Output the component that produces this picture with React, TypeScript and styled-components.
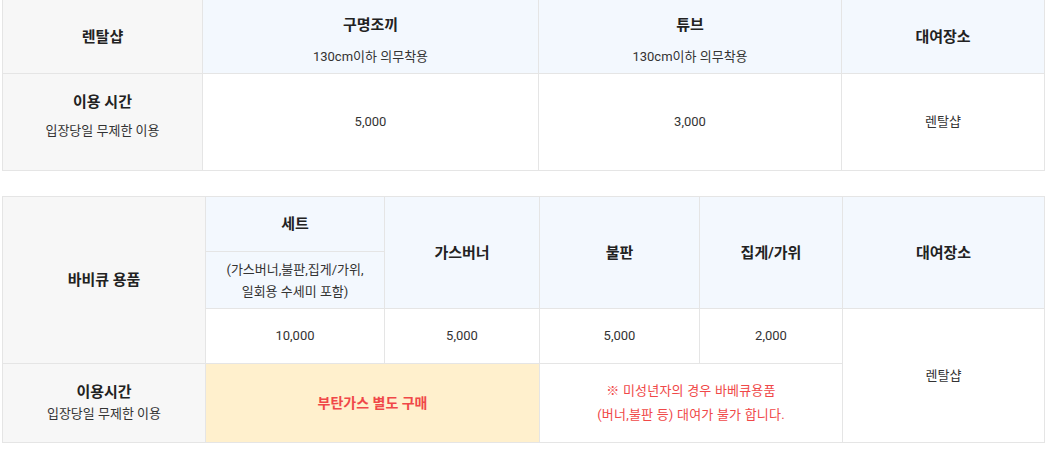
import React from "react";
import styled, { createGlobalStyle } from "styled-components";

const Global = createGlobalStyle`
  html, body { margin: 0; padding: 0; background: #fff; }
  body { font-family: Roboto, "Noto Sans CJK KR", sans-serif; color: #333; }
`;

const Page = styled.div`
  padding: 0 1px 0 2px;
  display: flex;
  flex-direction: column;
  gap: 25px;
`;

const Table = styled.table<{ $shiftTop?: boolean }>`
  width: 1042px;
  table-layout: fixed;
  border-collapse: collapse;
  margin-top: ${(p) => (p.$shiftTop ? "-1px" : "0")};
  font-size: 13px;
`;

const Row = styled.tr<{ $h: number }>`
  height: ${(p) => p.$h}px;
`;

type Tone = "side" | "head" | "plain" | "warn";

const Cell = styled.td<{ $tone?: Tone }>`
  border: 1px solid #e5e5e5;
  padding: 0;
  text-align: center;
  vertical-align: middle;
  background: ${(p) =>
    p.$tone === "side"
      ? "#f7f7f7"
      : p.$tone === "head"
      ? "#f3f8fe"
      : p.$tone === "warn"
      ? "#fff0cd"
      : "#fff"};
  color: #333;
  line-height: 20px;
`;

const Title = styled.div`
  font-size: 15px;
  font-weight: 700;
  color: #222;
  line-height: 22px;
`;

const Sub = styled.div<{ $gap?: number }>`
  font-size: 13px;
  color: #333;
  line-height: 22px;
  margin-top: ${(p) => p.$gap ?? 0}px;
`;

const Stack = styled.div<{ $padTop?: number; $padBottom?: number }>`
  display: flex;
  flex-direction: column;
  align-items: center;
  padding-top: ${(p) => p.$padTop ?? 0}px;
  padding-bottom: ${(p) => p.$padBottom ?? 0}px;
`;

const Warn = styled.span`
  font-size: 14px;
  font-weight: 700;
  color: #f04848;
`;

const Note = styled.div`
  font-size: 13px;
  letter-spacing: 0.2px;
  color: #f04848;
  line-height: 24px;
`;

export default function App() {
  return (
    <>
      <Global />
      <Page>
        <Table $shiftTop>
          <colgroup>
            <col style={{ width: 200 }} />
            <col style={{ width: 336 }} />
            <col style={{ width: 303 }} />
            <col style={{ width: 203 }} />
          </colgroup>
          <tbody>
            <Row $h={74}>
              <Cell $tone="side">
                <Title>렌탈샵</Title>
              </Cell>
              <Cell $tone="head">
                <Stack $padTop={9}>
                  <Title>구명조끼</Title>
                  <Sub $gap={10}>130cm이하 의무착용</Sub>
                </Stack>
              </Cell>
              <Cell $tone="head">
                <Stack $padTop={9}>
                  <Title>튜브</Title>
                  <Sub $gap={10}>130cm이하 의무착용</Sub>
                </Stack>
              </Cell>
              <Cell $tone="head">
                <Title>대여장소</Title>
              </Cell>
            </Row>
            <Row $h={97}>
              <Cell $tone="side">
                <Stack $padBottom={12}>
                  <Title>이용 시간</Title>
                  <Sub $gap={7}>입장당일 무제한 이용</Sub>
                </Stack>
              </Cell>
              <Cell>5,000</Cell>
              <Cell>3,000</Cell>
              <Cell>렌탈샵</Cell>
            </Row>
          </tbody>
        </Table>

        <Table>
          <colgroup>
            <col style={{ width: 203 }} />
            <col style={{ width: 179 }} />
            <col style={{ width: 155 }} />
            <col style={{ width: 160 }} />
            <col style={{ width: 143 }} />
            <col style={{ width: 202 }} />
          </colgroup>
          <tbody>
            <Row $h={55}>
              <Cell $tone="side" rowSpan={3}>
                <Title>바비큐 용품</Title>
              </Cell>
              <Cell $tone="head">
                <Title>세트</Title>
              </Cell>
              <Cell $tone="head" rowSpan={2}>
                <Title>가스버너</Title>
              </Cell>
              <Cell $tone="head" rowSpan={2}>
                <Title>불판</Title>
              </Cell>
              <Cell $tone="head" rowSpan={2}>
                <Title>집게/가위</Title>
              </Cell>
              <Cell $tone="head" rowSpan={2}>
                <Title>대여장소</Title>
              </Cell>
            </Row>
            <Row $h={57}>
              <Cell $tone="head">
                <Stack $padTop={1}>
                  <Sub>(가스버너,불판,집게/가위,</Sub>
                  <Sub>일회용 수세미 포함)</Sub>
                </Stack>
              </Cell>
            </Row>
            <Row $h={55}>
              <Cell>10,000</Cell>
              <Cell>5,000</Cell>
              <Cell>5,000</Cell>
              <Cell>2,000</Cell>
              <Cell rowSpan={2}>렌탈샵</Cell>
            </Row>
            <Row $h={79}>
              <Cell $tone="side">
                <Stack>
                  <Title>이용시간</Title>
                  <Sub>입장당일 무제한 이용</Sub>
                </Stack>
              </Cell>
              <Cell $tone="warn" colSpan={2}>
                <Warn>부탄가스 별도 구매</Warn>
              </Cell>
              <Cell colSpan={2}>
                <Note>※ 미성년자의 경우 바베큐용품</Note>
                <Note>(버너,불판 등) 대여가 불가 합니다.</Note>
              </Cell>
            </Row>
          </tbody>
        </Table>
      </Page>
    </>
  );
}
